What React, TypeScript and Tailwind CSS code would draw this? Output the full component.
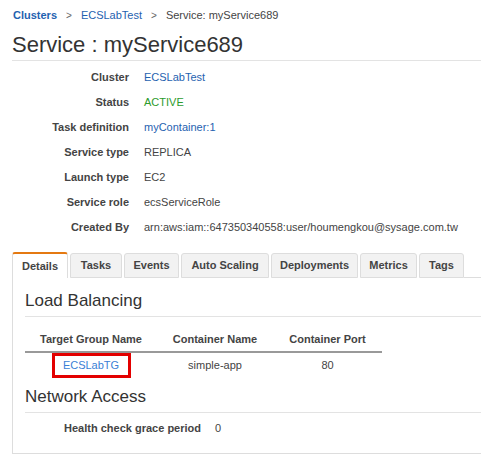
import React from 'react'

const details: { label: string; value: string; tone?: 'link' | 'ok' }[] = [
  { label: 'Cluster', value: 'ECSLabTest', tone: 'link' },
  { label: 'Status', value: 'ACTIVE', tone: 'ok' },
  { label: 'Task definition', value: 'myContainer:1', tone: 'link' },
  { label: 'Service type', value: 'REPLICA' },
  { label: 'Launch type', value: 'EC2' },
  { label: 'Service role', value: 'ecsServiceRole' },
  { label: 'Created By', value: 'arn:aws:iam::647350340558:user/houmengkou@sysage.com.tw' },
]

const tabs = [
  { name: 'Details', w: 'w-[56px]' },
  { name: 'Tasks', w: 'w-[52px]' },
  { name: 'Events', w: 'w-[55px]' },
  { name: 'Auto Scaling', w: 'w-[88px]' },
  { name: 'Deployments', w: 'w-[87px]' },
  { name: 'Metrics', w: 'w-[57px]' },
  { name: 'Tags', w: 'w-[45px]' },
]

export default function App() {
  return (
    <div className="w-[481px] h-[462px] overflow-hidden bg-white text-[11px] text-[#444] font-['Liberation_Sans',Arial,sans-serif]">
      {/* Breadcrumb */}
      <div className="flex items-center h-[16px] mt-[7px] pl-[13px] gap-[9px]">
        <span className="font-bold text-[#1f62b0]">Clusters</span>
        <span className="text-[#666] text-[10px]">&gt;</span>
        <span className="text-[#1f62b0]">ECSLabTest</span>
        <span className="text-[#666] text-[10px]">&gt;</span>
        <span className="text-[#444]">Service: myService689</span>
      </div>

      {/* Title */}
      <h1 className="h-[28px] mt-[8px] pl-[12px] text-[22px] leading-[28px] text-[#333]">Service : myService689</h1>
      <div className="ml-[12px] mt-[1px] h-px bg-[#e3e3e3]" />

      {/* Summary */}
      <div className="mt-[4px] flex flex-col">
        {details.map(d => (
          <div key={d.label} className="flex h-[25px] items-center">
            <span className="w-[129px] text-right font-bold">{d.label}</span>
            <span
              className={
                'ml-[15px] ' +
                (d.tone === 'link' ? 'text-[#1f62b0]' : d.tone === 'ok' ? 'text-[#2d9b2d]' : 'text-[#444]')
              }
            >
              {d.value}
            </span>
          </div>
        ))}
      </div>

      {/* Tabs */}
      <div className="mt-[12px] ml-[12px] flex items-end h-[26px]">
        {tabs.map((t, i) =>
          i === 0 ? (
            <div
              key={t.name}
              className={`${t.w} h-[26px] flex items-center justify-center font-bold bg-white border-x border-[#ddd] border-t-2 border-t-[#e47911] rounded-t-[3px]`}
            >
              {t.name}
            </div>
          ) : (
            <div
              key={t.name}
              className={`${t.w} ml-[2px] h-[25px] flex items-center justify-center font-bold bg-[#f2f2f2] border border-[#ddd] rounded-t-[3px]`}
            >
              {t.name}
            </div>
          ),
        )}
        <div className="flex-1 border-b border-[#ddd]" />
      </div>

      {/* Panel */}
      <div className="ml-[12px] h-[176px] border-l border-b border-[#ddd] pl-[12px] pt-[12px]">
        <h2 className="text-[17px] leading-[22px] text-[#333]">Load Balancing</h2>
        <div className="mt-[4px] h-px bg-[#e3e3e3]" />

        <table className="mt-[10px] w-[357px] border-collapse text-[11px]">
          <thead>
            <tr className="h-[25px] border-b-2 border-[#999]">
              <th className="w-[132px] font-bold text-center">Target Group Name</th>
              <th className="w-[116px] font-bold text-center">Container Name</th>
              <th className="w-[109px] font-bold text-center">Container Port</th>
            </tr>
          </thead>
          <tbody>
            <tr className="h-[26px]">
              <td className="text-center">
                <span className="inline-flex w-[79px] h-[25px] items-center justify-center border-[3px] border-[#e30000] text-[#3a7fd6]">
                  ECSLabTG
                </span>
              </td>
              <td className="text-center">simple-app</td>
              <td className="text-center">80</td>
            </tr>
          </tbody>
        </table>

        <h2 className="mt-[8px] text-[17px] leading-[22px] text-[#333]">Network Access</h2>
        <div className="mt-[4px] h-px bg-[#e3e3e3]" />
        <div className="flex items-center h-[24px] mt-[3px]">
          <span className="w-[176px] text-right font-bold">Health check grace period</span>
          <span className="ml-[14px] text-[#444]">0</span>
        </div>
      </div>
    </div>
  )
}
